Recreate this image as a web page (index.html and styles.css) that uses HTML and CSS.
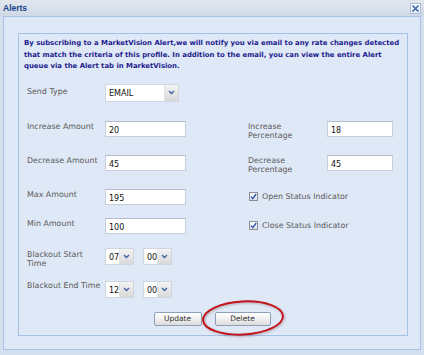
FILE: index.html
```html
<!DOCTYPE html>
<html>
<head>
<meta charset="utf-8">
<link rel="stylesheet" href="styles.css">
</head>
<body>
<div class="window">
  <div class="header">
    <span class="title">Alerts</span>
    <span class="close"><svg width="9" height="9" viewBox="0 0 9 9"><path d="M1.5 1.5 L7.5 7.5 M7.5 1.5 L1.5 7.5" stroke="#3a67a8" stroke-width="1.6" fill="none"/></svg></span>
  </div>
  <div class="body">
    <div class="box">
      <p class="intro">By subscribing to a MarketVision Alert,we will notify you via email to any rate changes detected that match the criteria of this profile. In addition to the email, you can view the entire Alert queue via the Alert tab in MarketVision.</p>
      <div class="form">
        <div class="label l-send">Send Type</div>
        <div class="field"><div class="select s-wide"><span class="val">EMAIL</span><span class="trigger"><svg width="7" height="5" viewBox="0 0 7 5"><path d="M1 1 L3.5 3.5 L6 1" stroke="#3f62a8" stroke-width="1.4" fill="none"/></svg></span></div></div>
        <div></div><div></div><div></div>

        <div class="label">Increase Amount</div>
        <div class="field"><div class="input i-left">20</div></div>
        <div></div>
        <div class="label">Increase Percentage</div>
        <div class="field"><div class="input i-right">18</div></div>

        <div class="label">Decrease Amount</div>
        <div class="field"><div class="input i-left">45</div></div>
        <div></div>
        <div class="label">Decrease Percentage</div>
        <div class="field"><div class="input i-right">45</div></div>

        <div class="label">Max Amount</div>
        <div class="field"><div class="input i-left">195</div></div>
        <div></div>
        <div class="check"><span class="cb"><svg width="7" height="7" viewBox="0 0 7 7"><path d="M1 3.6 L2.8 5.6 L6.2 1" stroke="#2b4fa6" stroke-width="1.3" fill="none"/></svg></span><span>Open Status Indicator</span></div>

        <div class="label">Min Amount</div>
        <div class="field"><div class="input i-left">100</div></div>
        <div></div>
        <div class="check"><span class="cb"><svg width="7" height="7" viewBox="0 0 7 7"><path d="M1 3.6 L2.8 5.6 L6.2 1" stroke="#2b4fa6" stroke-width="1.3" fill="none"/></svg></span><span>Close Status Indicator</span></div>

        <div class="label l-start">Blackout Start Time</div>
        <div class="field times">
          <div class="select s-time"><span class="val">07</span><span class="trigger"><svg width="7" height="5" viewBox="0 0 7 5"><path d="M1 1 L3.5 3.5 L6 1" stroke="#3f62a8" stroke-width="1.4" fill="none"/></svg></span></div>
          <div class="select s-time"><span class="val">00</span><span class="trigger"><svg width="7" height="5" viewBox="0 0 7 5"><path d="M1 1 L3.5 3.5 L6 1" stroke="#3f62a8" stroke-width="1.4" fill="none"/></svg></span></div>
        </div>
        <div></div><div></div><div></div>

        <div class="label l-end">Blackout End Time</div>
        <div class="field times">
          <div class="select s-time"><span class="val">12</span><span class="trigger"><svg width="7" height="5" viewBox="0 0 7 5"><path d="M1 1 L3.5 3.5 L6 1" stroke="#3f62a8" stroke-width="1.4" fill="none"/></svg></span></div>
          <div class="select s-time"><span class="val">00</span><span class="trigger"><svg width="7" height="5" viewBox="0 0 7 5"><path d="M1 1 L3.5 3.5 L6 1" stroke="#3f62a8" stroke-width="1.4" fill="none"/></svg></span></div>
        </div>
        <div></div><div></div><div></div>
      </div>
      <div class="buttons">
        <button class="btn b-update">Update</button>
        <span class="delete-wrap">
          <button class="btn b-delete">Delete</button>
          <svg class="circle" width="84" height="38" viewBox="0 0 84 38"><ellipse cx="42" cy="19" rx="40" ry="16.5" transform="rotate(-3 42 19)" fill="none" stroke="#c3141c" stroke-width="2"/></svg>
        </span>
      </div>
    </div>
  </div>
</div>
</body>
</html>
```
FILE: styles.css
```css
html, body {
  margin: 0;
  padding: 0;
}
body {
  width: 424px;
  height: 355px;
  overflow: hidden;
  background: #d9e3f0;
  font-family: "DejaVu Sans", Verdana, sans-serif;
}
.window {
  width: 424px;
  height: 355px;
  background: #d5e0ee;
  display: flex;
  flex-direction: column;
}
.header {
  height: 16px;
  flex: none;
  display: flex;
  align-items: flex-start;
  justify-content: space-between;
  padding: 0 3px 0 3px;
  background: linear-gradient(#e2e7ee, #cfd9e6);
}
.title {
  font-family: "Liberation Sans", Arial, sans-serif;
  font-weight: bold;
  font-size: 8.5px;
  line-height: 16px;
  color: #15428b;
}
.close {
  margin-top: 3px;
  width: 11px;
  height: 11px;
  box-sizing: border-box;
  border: 1px solid #a9bedb;
  background: linear-gradient(#ffffff, #e4ebf4);
  display: flex;
  align-items: center;
  justify-content: center;
}
.body {
  margin: 0 3px;
  height: 334px;
  flex: none;
  box-sizing: border-box;
  border: 1px solid #a8c1e4;
  background: #dfe8f6;
  padding: 16px 12px 14px 14px;
}
.box {
  height: 303px;
  box-sizing: border-box;
  border: 1px solid #a5c0e6;
  padding: 4px 7px 0 5px;
}
.intro {
  margin: 0;
  font-weight: bold;
  font-size: 6.9px;
  line-height: 11.5px;
  color: #1c1c8e;
}
.form {
  margin: 11px 0 0 3px;
  display: grid;
  grid-template-columns: 78px 81px 62px 79px 66px;
  grid-template-rows: 37px 34px 34px 29px 30px 33px 31px;
  align-items: start;
}
.label {
  font-size: 7.9px;
  line-height: 9.5px;
  color: #5a5a5a;
  padding: 1px 4px 0 0;
}
.l-send { padding-top: 3px; }
.l-start { padding-top: 2px; }
.l-end { padding-top: 0; }
.input {
  height: 16px;
  box-sizing: border-box;
  border: 1px solid #c6cedb;
  border-top-color: #b5bccb;
  background: #fff;
  font-size: 8px;
  line-height: 15px;
  padding: 1px 0 0 3px;
  color: #111;
}
.i-left { width: 81px; }
.i-right { width: 66px; }
.select {
  display: flex;
  box-sizing: border-box;
  border: 1px solid #d0d6e0;
  background: #fff;
  height: 18px;
}
.s-wide { width: 74px; }
.s-time { width: 29px; height: 17px; }
.val {
  flex: 1;
  font-size: 8px;
  line-height: 16px;
  padding: 1px 0 0 3px;
  color: #111;
}
.trigger {
  width: 13px;
  flex: none;
  background: linear-gradient(#f3f3f3, #d9d9d9);
  border-left: 1px solid #e4e4e4;
  display: flex;
  align-items: center;
  justify-content: center;
}
.times {
  display: flex;
  gap: 9px;
}
.check {
  grid-column: 4 / 6;
  display: flex;
  align-items: center;
  gap: 4px;
  padding-top: 3px;
  margin-left: 1px;
  font-size: 7.9px;
  color: #5a5a5a;
}
.cb {
  width: 9px;
  height: 9px;
  box-sizing: border-box;
  border: 1px solid #8a8f9a;
  background: linear-gradient(#fdfdfd, #dfe3ea);
  display: flex;
  align-items: center;
  justify-content: center;
}
.buttons {
  display: flex;
  justify-content: center;
  gap: 13px;
  margin-left: 0;
}
.btn {
  height: 14px;
  box-sizing: border-box;
  border: 1px solid #8e9fb8;
  border-radius: 2px;
  background: linear-gradient(#ffffff 0%, #f0f0f0 50%, #dcdcdc 100%);
  font-family: "DejaVu Sans", Verdana, sans-serif;
  font-size: 7.5px;
  color: #333;
  padding: 0;
  line-height: 12px;
}
.b-update { width: 48px; }
.b-delete { width: 56px; }
.delete-wrap {
  position: relative;
  display: flex;
}
.circle {
  position: absolute;
  left: -14px;
  top: -13px;
  filter: drop-shadow(1px 1px 1px rgba(90, 40, 40, 0.35));
}
```
